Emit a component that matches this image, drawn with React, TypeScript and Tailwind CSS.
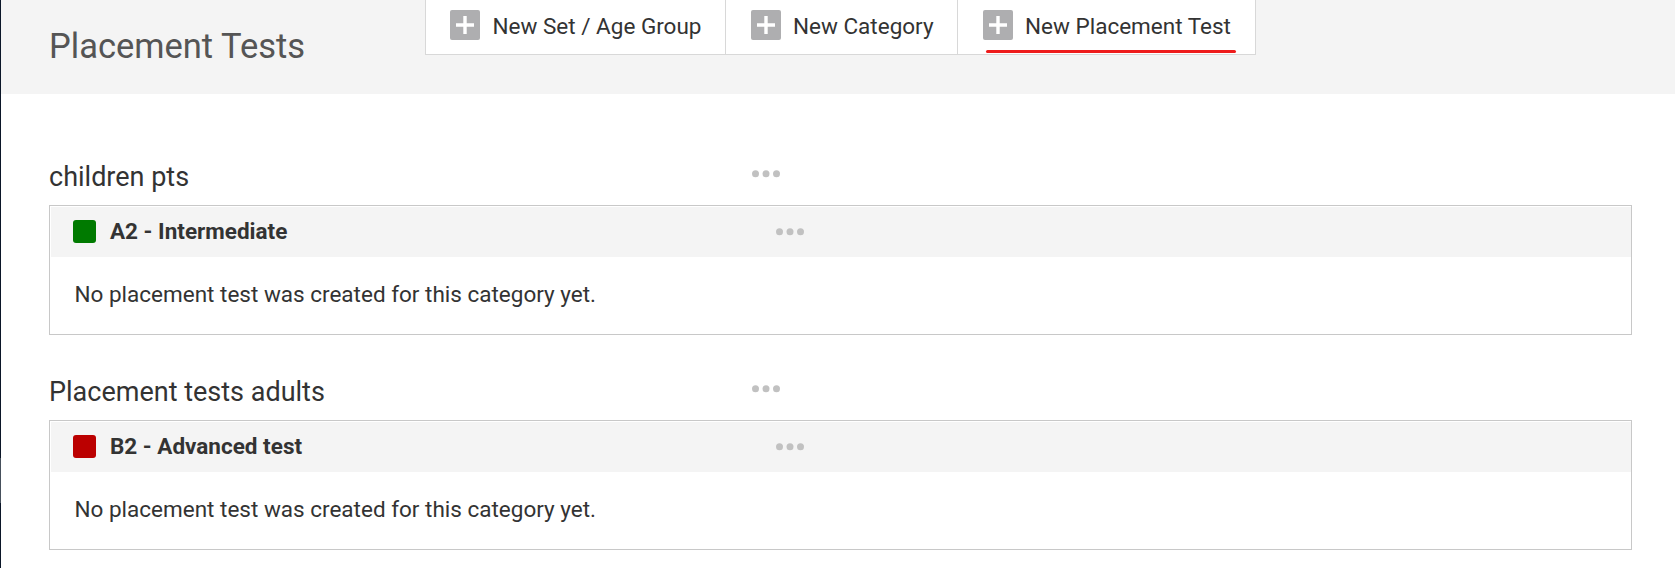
type Group = {
  title: string;
  category: string;
  swatch: string;
};

const actions = [
  { label: "New Set / Age Group", box: "w-[300px] gap-[12.5px] pl-6", active: false },
  { label: "New Category", box: "w-[232px] gap-3 pl-[25px]", active: false },
  { label: "New Placement Test", box: "w-[298px] gap-3 pl-[25px]", active: true },
];

const groups: Group[] = [
  { title: "children pts", category: "A2 - Intermediate", swatch: "bg-[#007a00]" },
  { title: "Placement tests adults", category: "B2 - Advanced test", swatch: "bg-[#bb0000]" },
];

function PlusIcon() {
  return (
    <svg viewBox="0 0 30 30" className="h-[30px] w-[30px] shrink-0">
      <rect width="30" height="30" rx="2" fill="#aeaeb0" />
      <path d="M6 15h18M15 6v18" stroke="#fff" strokeWidth="3.4" />
    </svg>
  );
}

function Dots() {
  return (
    <svg viewBox="0 0 28 8" className="h-2 w-7 shrink-0" fill="#c1c1c1">
      <circle cx="3.5" cy="3.8" r="3.5" />
      <circle cx="14" cy="3.8" r="3.5" />
      <circle cx="24.5" cy="3.8" r="3.5" />
    </svg>
  );
}

function GroupSection({ title, category, swatch }: Group) {
  return (
    <section className="h-[215px]">
      <div className="flex h-[55px] items-start">
        <h2 className="w-[703px] text-[27px] leading-[54px] whitespace-nowrap">{title}</h2>
        <div className="pt-[20px]">
          <Dots />
        </div>
      </div>
      <div className="h-[130px] border border-[#c8c8c8] pt-px pl-px">
        <div className="flex h-[50px] items-center bg-[#f4f4f4] pb-px pl-[22px]">
          <span className={`h-[23px] w-[23px] shrink-0 rounded-[3px] ${swatch}`} />
          <h3 className="ml-[14px] w-[666px] text-[22.5px] leading-[49px] font-bold whitespace-nowrap">{category}</h3>
          <Dots />
        </div>
        <p className="pl-[23.5px] text-[22.5px] leading-[75px]">No placement test was created for this category yet.</p>
      </div>
    </section>
  );
}

export default function App() {
  return (
    <div className="flex h-[568px] overflow-hidden bg-white font-[Roboto,sans-serif] text-[#333]">
      <div className="flex w-px shrink-0 flex-col bg-[#0b1628]">
        <div className="mt-[458px] h-[45px] w-px bg-[#46505c]" />
      </div>
      <div className="min-w-0 flex-1">
        <header className="flex h-[94px] bg-[#f4f4f4] pl-12">
          <h1 className="w-[376px] text-[34.5px] leading-[93px] whitespace-nowrap text-[#555]">Placement Tests</h1>
          <nav className="flex h-[55px] border-b border-l border-[#d8d8d8] bg-white">
            {actions.map((action) => (
              <button
                key={action.label}
                className={`relative flex h-[54px] items-start border-r border-[#d8d8d8] pt-[10px] text-[22.5px] leading-[33px] whitespace-nowrap ${action.box}`}
              >
                <PlusIcon />
                <span>{action.label}</span>
                {action.active && (
                  <span className="absolute top-[50px] left-[28px] h-[3px] w-[250px] rounded-full bg-[#ee1c1c]" />
                )}
              </button>
            ))}
          </nav>
        </header>
        <main className="pt-14 pr-[43px] pl-12">
          {groups.map((group) => (
            <GroupSection key={group.title} {...group} />
          ))}
        </main>
      </div>
    </div>
  );
}
